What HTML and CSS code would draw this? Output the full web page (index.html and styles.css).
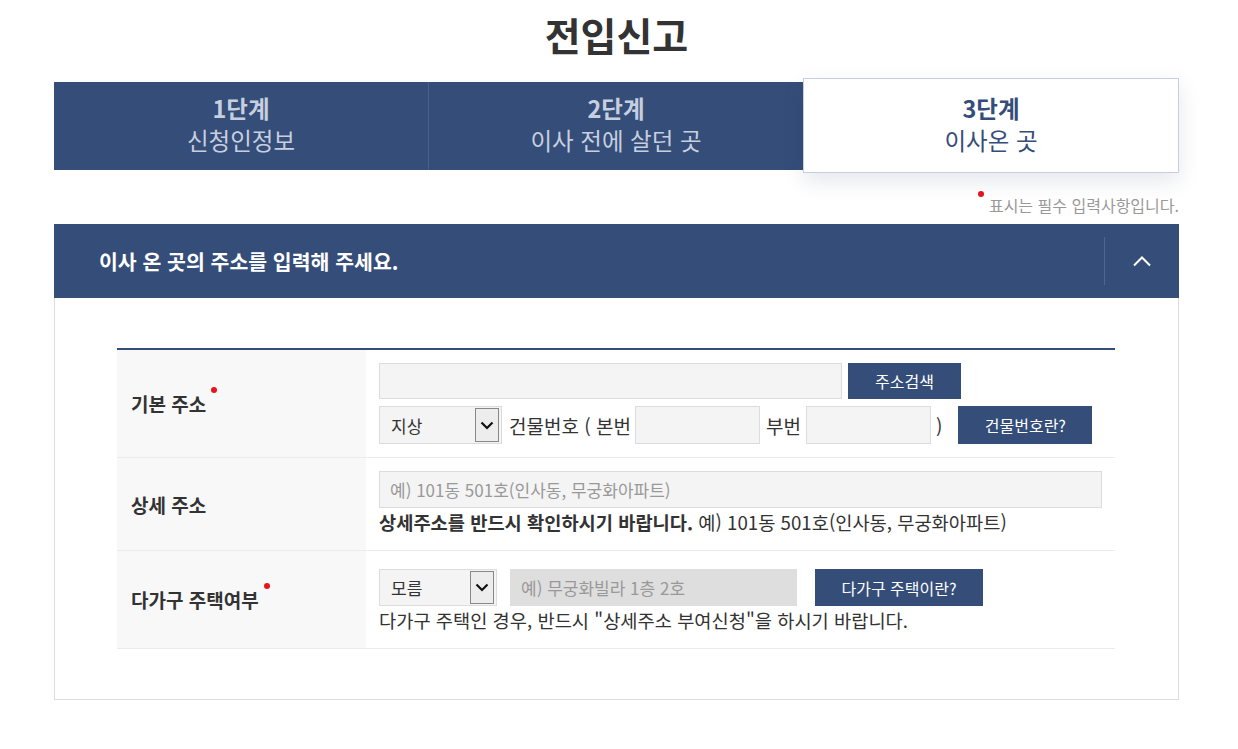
FILE: index.html
```html
<!DOCTYPE html>
<html lang="ko">
<head>
    <meta charset="UTF-8">
    <meta name="viewport" content="width=device-width, initial-scale=1.0">
    <title>전입신고</title>
    <link rel="stylesheet" href="styles.css">
</head>
<body>

<div id="wrap">
    <h1 class="page-title">전입신고</h1>

    <div class="steps">
        <div class="step">
            <strong>1단계</strong>
            <span>신청인정보</span>
        </div>
        <div class="step">
            <strong>2단계</strong>
            <span>이사 전에 살던 곳</span>
        </div>
        <div class="step on">
            <strong>3단계</strong>
            <span>이사온 곳</span>
        </div>
    </div>

    <p class="req-note"><i class="dot"></i>표시는 필수 입력사항입니다.</p>

    <div class="panel-head">
        <h2>이사 온 곳의 주소를 입력해 주세요.</h2>
        <button class="toggle" type="button" aria-label="접기">
            <svg width="20" height="12" viewBox="0 0 20 12"><polyline points="2,10.5 10,2.5 18,10.5" fill="none" stroke="#fff" stroke-width="2"/></svg>
        </button>
    </div>

    <div class="panel-body">
        <table class="form-table">
            <tr class="row-addr">
                <th>기본 주소<i class="dot"></i></th>
                <td>
                    <div class="line">
                        <input class="inp w-addr" type="text">
                        <button class="btn btn-search" type="button">주소검색</button>
                    </div>
                    <div class="line">
                        <div class="sel w-sel1"><span>지상</span><b class="arr"><svg width="14" height="9" viewBox="0 0 14 9"><polyline points="1.5,1.5 7,7 12.5,1.5" fill="none" stroke="#111" stroke-width="2.2"/></svg></b></div>
                        <span class="txt t-bld">건물번호 ( 본번</span>
                        <input class="inp w-num" type="text">
                        <span class="txt t-sub">부번</span>
                        <input class="inp w-num" type="text">
                        <span class="txt t-par">)</span>
                        <button class="btn btn-bld" type="button">건물번호란?</button>
                    </div>
                </td>
            </tr>
            <tr class="row-detail">
                <th>상세 주소</th>
                <td>
                    <input class="inp w-detail" type="text" placeholder="예) 101동 501호(인사동, 무궁화아파트)">
                    <p class="help"><strong>상세주소를 반드시 확인하시기 바랍니다.</strong> 예) 101동 501호(인사동, 무궁화아파트)</p>
                </td>
            </tr>
            <tr class="row-multi">
                <th>다가구 주택여부<i class="dot"></i></th>
                <td>
                    <div class="line">
                        <div class="sel w-sel2"><span>모름</span><b class="arr"><svg width="14" height="9" viewBox="0 0 14 9"><polyline points="1.5,1.5 7,7 12.5,1.5" fill="none" stroke="#111" stroke-width="2.2"/></svg></b></div>
                        <input class="inp w-floor" type="text" placeholder="예) 무궁화빌라 1층 2호" disabled>
                        <button class="btn btn-multi" type="button">다가구 주택이란?</button>
                    </div>
                    <p class="help">다가구 주택인 경우, 반드시 "상세주소 부여신청"을 하시기 바랍니다.</p>
                </td>
            </tr>
        </table>
    </div>
</div>

</body>
</html>
```

FILE: styles.css
```css
body {
    margin: 0;
    padding: 0;
    background-color: #fff;
    color: #333;
    font-family: "Noto Sans CJK KR", "Noto Sans", sans-serif;
}
#wrap {
    width: 1125px;
    margin-left: 54px;
}
.page-title {
    margin: 4px 0 18px;
    font-size: 39px;
    line-height: 60px;
    font-weight: 700;
    text-align: center;
    color: #333;
}

/* 단계 탭 */
.steps {
    display: flex;
    height: 88px;
}
.step {
    flex: 1;
    height: 88px;
    box-sizing: border-box;
    padding-top: 10px;
    background-color: #344d79;
    color: #c7cfdf;
    text-align: center;
    border-left: 1px solid #4a6290;
}
.step:first-child {
    border-left: 0;
}
.step strong,
.step span {
    display: block;
    font-size: 23.5px;
    line-height: 32px;
}
.step strong {
    font-weight: 700;
}
.step.on {
    margin-top: -4px;
    height: 95px;
    padding-top: 13px;
    background-color: #fff;
    color: #344d79;
    border: 1px solid #c6cedf;
    box-shadow: 0 8px 20px rgba(40, 60, 100, 0.12);
    position: relative;
}

.dot {
    display: inline-block;
    width: 6px;
    height: 6px;
    border-radius: 50%;
    background-color: #e8141b;
    vertical-align: top;
}
.req-note {
    margin: 0;
    height: 54px;
    box-sizing: border-box;
    padding-top: 24px;
    text-align: right;
    font-size: 16px;
    line-height: 22px;
    color: #999;
}
.req-note .dot {
    margin: -3px 5px 0 0;
}

/* 패널 */
.panel-head {
    display: flex;
    align-items: center;
    height: 74px;
    background-color: #344d79;
}
.panel-head h2 {
    flex: 1;
    margin: 0;
    padding-left: 45px;
    font-size: 20.5px;
    font-weight: 700;
    color: #fff;
}
.toggle {
    width: 75px;
    height: 48px;
    padding: 0;
    border: 0;
    border-left: 1px solid #4f6592;
    background: none;
    display: flex;
    align-items: center;
    justify-content: center;
}
.panel-body {
    border: 1px solid #dcdcdc;
    border-top: 0;
    padding: 50px 63px 50px 62px;
}

.form-table {
    width: 100%;
    border-collapse: collapse;
    border-top: 2px solid #344d79;
}
.form-table th {
    width: 249px;
    box-sizing: border-box;
    padding-left: 14px;
    background-color: #f8f8f8;
    text-align: left;
    font-size: 19px;
    font-weight: 700;
    border-bottom: 1px solid #ebebeb;
}
.form-table th .dot {
    margin: -3px 0 0 5px;
}
.form-table td {
    padding: 13px 13px 13px 13px;
    border-bottom: 1px solid #ebebeb;
    vertical-align: top;
}
.row-addr td {
    height: 80px;
}
.row-detail td {
    height: 66px;
}
.row-multi td {
    padding-top: 18px;
    height: 66px;
}

.line {
    display: flex;
    align-items: center;
}
.line + .line {
    margin-top: 7px;
}
.inp {
    box-sizing: border-box;
    height: 36px;
    margin: 0;
    padding: 0 10px;
    border: 1px solid #dcdcdc;
    background-color: #f4f4f4;
    font-family: inherit;
    font-size: 17px;
    color: #333;
}
.inp::placeholder {
    color: #999;
}
.inp:disabled {
    background-color: #dedede;
    border-color: #dedede;
}
.w-addr { width: 463px; }
.w-num { width: 125px; height: 38px; }
.w-detail { width: 723px; height: 37px; }
.w-floor { width: 287px; height: 37px; margin-left: 13px; }

.sel {
    box-sizing: border-box;
    display: flex;
    align-items: center;
    justify-content: space-between;
    height: 38px;
    padding: 0 2px 0 11px;
    border: 1px solid #dcdcdc;
    background-color: #f4f4f4;
    font-size: 17px;
}
.w-sel1 { width: 123px; }
.w-sel2 { width: 118px; height: 37px; }
.arr {
    box-sizing: border-box;
    width: 24px;
    height: 34px;
    border: 1px solid #888;
    background-color: #ededed;
    display: flex;
    align-items: center;
    justify-content: center;
}
.w-sel2 .arr {
    height: 33px;
}

.txt {
    font-size: 19px;
    color: #333;
}
.t-bld { margin: 0 4px 0 7px; }
.t-sub { margin: 0 5px 0 6px; }
.t-par { margin: 0 16px 0 5px; }

.btn {
    box-sizing: border-box;
    height: 36px;
    padding: 0;
    border: 0;
    background-color: #344d79;
    color: #fff;
    font-family: inherit;
    font-size: 16px;
}
.btn-search { width: 113px; margin-left: 6px; }
.btn-bld { width: 134px; height: 38px; }
.btn-multi { width: 168px; height: 37px; margin-left: 18px; }

.help {
    margin: 0;
    font-size: 18.7px;
    line-height: 28px;
    color: #333;
}
.help strong {
    font-weight: 700;
}
```
